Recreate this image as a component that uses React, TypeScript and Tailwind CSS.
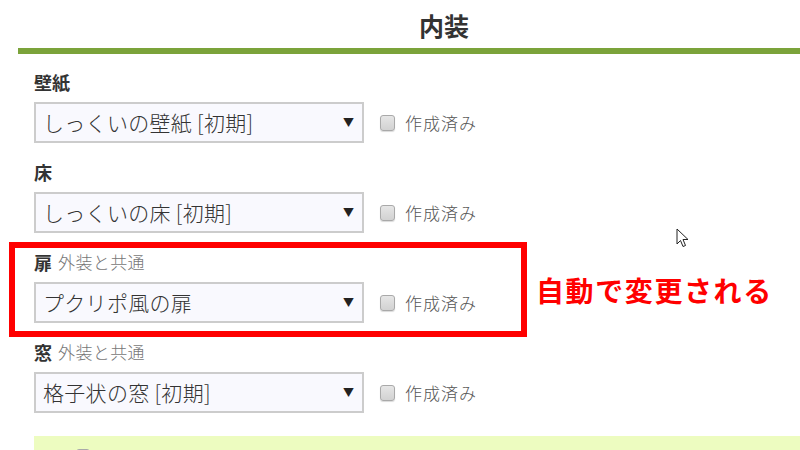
const font = { fontFamily: '"Noto Sans CJK JP", "Noto Sans", sans-serif' };

const fields = [
  { label: "壁紙", sub: "", value: "しっくいの壁紙 [初期]", marked: false },
  { label: "床", sub: "", value: "しっくいの床 [初期]", marked: false },
  { label: "扉", sub: "外装と共通", value: "プクリポ風の扉", marked: true },
  { label: "窓", sub: "外装と共通", value: "格子状の窓 [初期]", marked: false },
];

function Field({ label, sub, value }: { label: string; sub: string; value: string }) {
  return (
    <div className="pb-[17px]">
      {/* ラベル */}
      <div className="flex h-[24px] items-center gap-[6px] mb-[8px]">
        <span className="text-[18px] font-bold text-[#333]">{label}</span>
        {sub && <span className="text-[17px] font-light tracking-[0.4px] text-[#777]">{sub}</span>}
      </div>

      <div className="flex items-center">
        {/* セレクト */}
        <div className="flex h-[41px] w-[330px] items-center justify-between border-2 border-[#cccccc] bg-[#f9f9fe] pl-[7px] pr-[8px]">
          <span className="text-[21px] leading-none font-light tracking-[0.3px] text-[#333]">{value}</span>
          <span className="text-[11px] text-[#222]">▼</span>
        </div>

        {/* チェックボックス */}
        <div className="ml-[16px] flex items-center gap-[10px]">
          <span className="block h-[16px] w-[15px] rounded-[3px] border border-[#a9a9a9] bg-gradient-to-b from-[#e6e6e6] to-[#d2d2d2] shadow-[0_1px_1px_rgba(0,0,0,0.15)]" />
          <span className="text-[17px] font-light tracking-[1px] text-[#555]">作成済み</span>
        </div>
      </div>
    </div>
  );
}

export default function App() {
  return (
    <div className="relative h-[450px] w-[800px] overflow-hidden bg-white" style={font}>
      {/* タイトル */}
      <div className="flex h-[48px] items-center justify-center pl-[88px] pt-[3px]">
        <h1 className="text-[25px] font-bold text-[#333]">内装</h1>
      </div>
      <div className="ml-[18px] h-[6px] bg-[#7ba33a]" />

      <div className="pl-[34px] pt-[16px]">
        {fields.map((f) => (
          <div key={f.label} className="relative">
            {f.marked && (
              <>
                {/* 赤枠 */}
                <div className="pointer-events-none absolute left-[-25px] top-[-8px] h-[95px] w-[518px] border-[6px] border-[#ff0000]" />
                <div className="absolute left-[502px] top-[19px] text-[28px] font-bold tracking-[1.6px] text-[#ff0000]">
                  自動で変更される
                </div>
              </>
            )}
            <Field label={f.label} sub={f.sub} value={f.value} />
          </div>
        ))}

        {/* 下のボックス */}
        <div className="mt-[6px] h-[40px] bg-[#edfcc0] pl-[42px] pt-[13px]">
          <span className="block h-[14px] w-[14px] rounded-[3px] border border-[#a9a9a9] bg-[#dcdcdc]" />
        </div>
      </div>

      {/* マウスカーソル */}
      <svg className="absolute left-[676px] top-[228px]" width="14" height="20" viewBox="0 0 14 20">
        <path d="M1 1 L1 16 L4.5 12.5 L7 18.5 L9.5 17.5 L7 11.5 L12 11.5 Z" fill="#fff" stroke="#222" strokeWidth="1" />
      </svg>
    </div>
  );
}
